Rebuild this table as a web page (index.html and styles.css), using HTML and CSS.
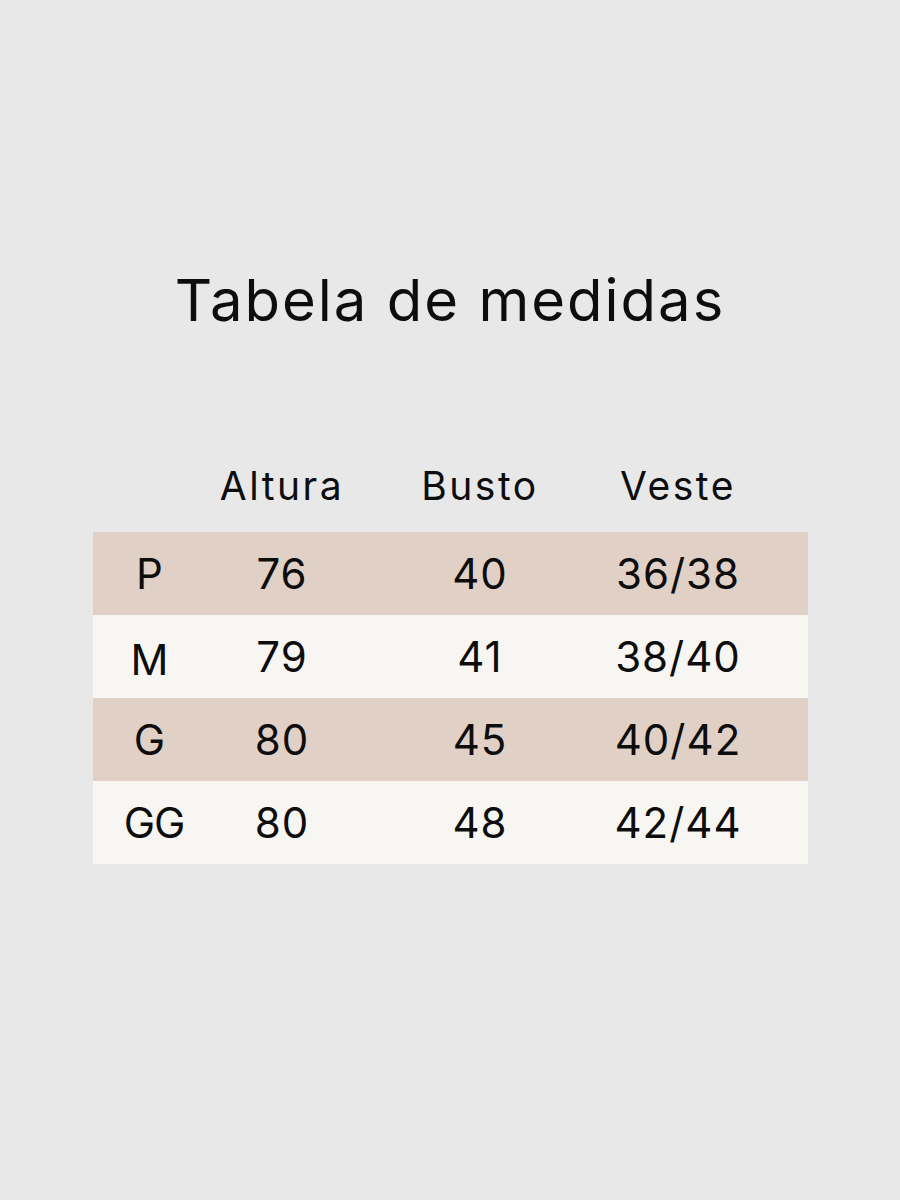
FILE: index.html
```html
<!DOCTYPE html>
<html lang="pt">
<head>
<meta charset="utf-8">
<title>Tabela de medidas</title>
<link rel="stylesheet" href="styles.css">
</head>
<body>
<main class="page">
  <h1 class="title">Tabela de medidas</h1>
  <div class="table">
    <div class="row head">
      <span></span><span>Altura</span><span>Busto</span><span>Veste</span>
    </div>
    <div class="row tan">
      <span>P</span><span>76</span><span>40</span><span>36/38</span>
    </div>
    <div class="row light">
      <span class="low">M</span><span>79</span><span>41</span><span>38/40</span>
    </div>
    <div class="row tan">
      <span>G</span><span>80</span><span>45</span><span>40/42</span>
    </div>
    <div class="row light">
      <span class="gg">GG</span><span>80</span><span>48</span><span>42/44</span>
    </div>
  </div>
</main>
</body>
</html>
```

FILE: styles.css
```css
html, body {
  margin: 0;
  padding: 0;
}
body {
  background: #e8e8e8;
  font-family: Inter, "Open Sans", "Liberation Sans", sans-serif;
  color: #0d0d0d;
}
.page {
  width: 900px;
  height: 1200px;
  box-sizing: border-box;
  padding-top: 262px;
}
.title {
  margin: 0;
  text-align: center;
  font-weight: 400;
  font-size: 58px;
  line-height: 76px;
  letter-spacing: 2px;
}
.table {
  margin: 112px 0 0 93px;
  width: 715px;
}
.row {
  display: grid;
  grid-template-columns: 114px 150px 246px 150px 1fr;
  align-items: center;
  height: 83px;
  font-size: 42px;
  letter-spacing: 1px;
}
.row span {
  text-align: center;
}
.head {
  height: 82px;
  font-size: 39px;
  letter-spacing: 2.5px;
  padding-bottom: 12px;
  box-sizing: border-box;
}
.tan {
  background: #e0d0c6;
}
.light {
  background: #f8f6f3;
}
.low {
  position: relative;
  top: 3px;
}
.gg {
  letter-spacing: -1px;
  position: relative;
  left: 4px;
}
```
